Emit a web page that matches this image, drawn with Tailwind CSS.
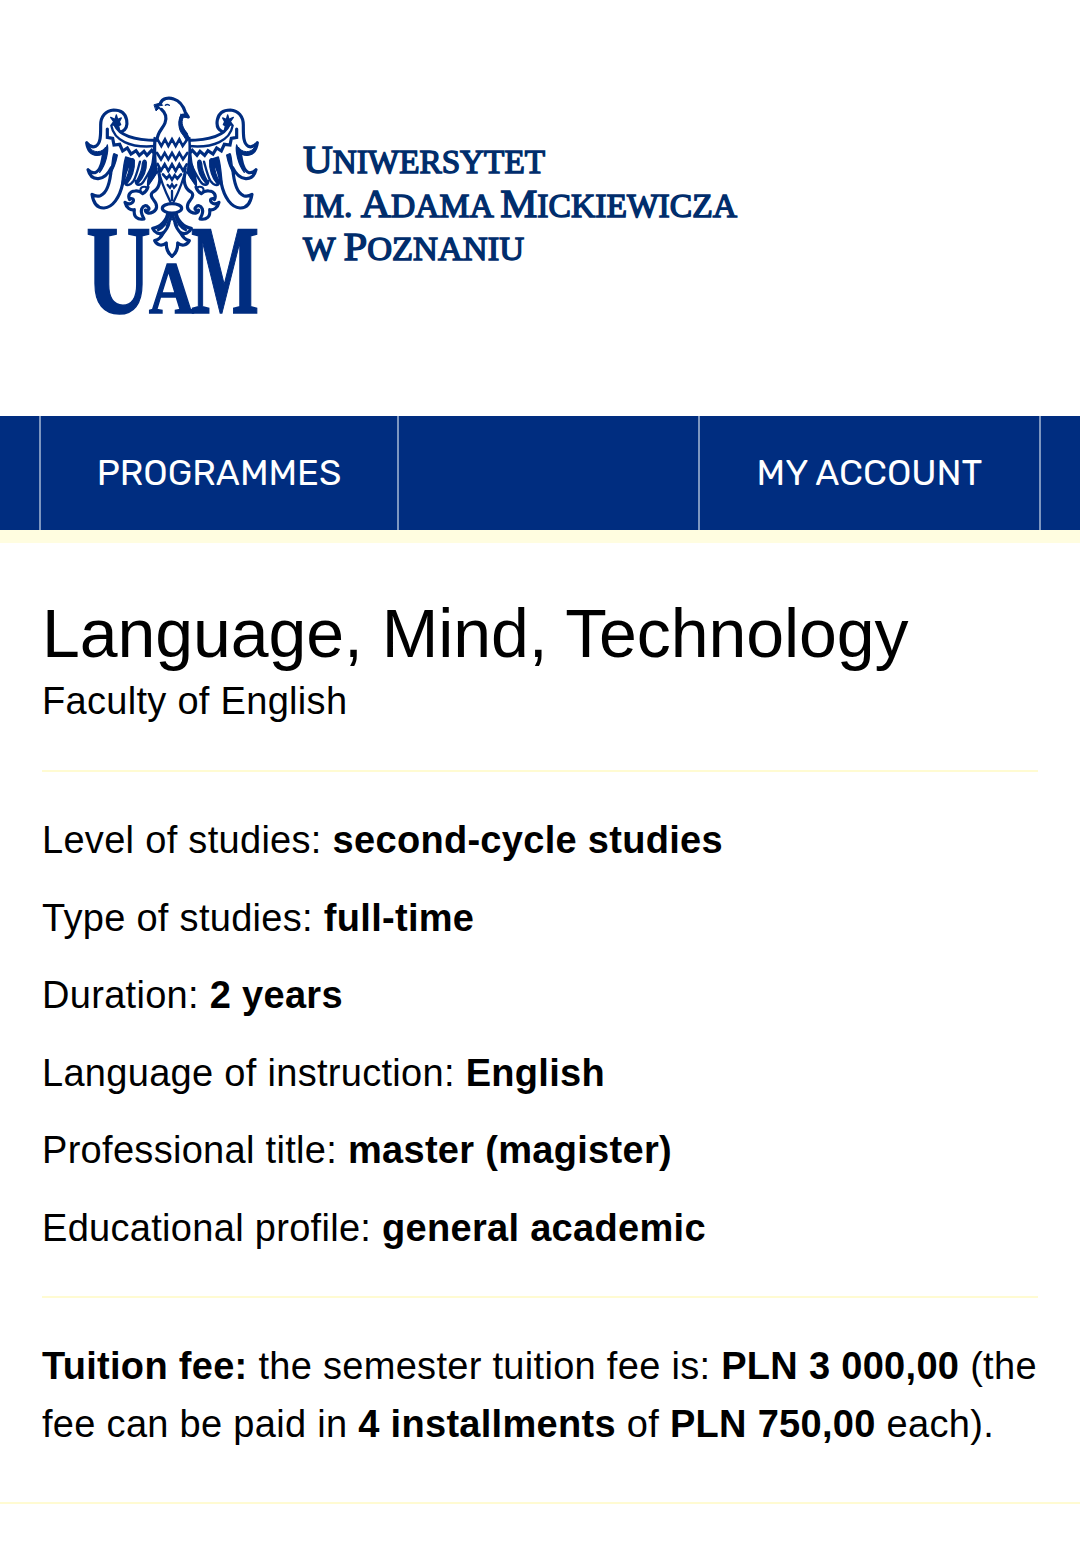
<!DOCTYPE html>
<html lang="en">
<head>
    <meta charset="UTF-8"/>
    <meta name="viewport" content="width=device-width, initial-scale=1.0"/>
    <title>Language, Mind, Technology - Uniwersytet im. Adama Mickiewicza w Poznaniu</title>
    <script src="https://cdn.jsdelivr.net/npm/@tailwindcss/browser@4"></script>
</head>
<body class="bg-white text-black font-['Liberation_Sans',Arial,sans-serif]">

<!-- Logo -->
<header class="h-[416px] pl-[75px] pt-[85px]">
    <svg class="w-[700px] h-[240px]" viewBox="0 0 700 240" role="img" aria-label="Uniwersytet im. Adama Mickiewicza w Poznaniu">
        <defs>
            <g id="wing">
                <!-- outline with three long feathers -->
                <path fill="#fff" d="M140 140C154 134 158 122 155 105C151 83 134 75 116 75C92 77 77 94 77 120C77 148 78 176 62 184C52 188 42 182 35 173C38 194 48 207 66 208C75 208 81 204 86 200C83 230 77 258 60 263C50 264 44 260 39 254C44 274 54 282 70 281C90 280 101 264 109 248C106 288 98 324 76 332C66 335 57 332 51 328C55 354 66 370 87 369C113 367 134 338 143 296C148 268 156 246 164 228"/>
                <path fill="#002d80" stroke-width="3" d="M35 173C43 190 52 200 68 200C80 200 88 192 92 186C90 206 78 212 66 211C48 209 37 194 35 173Z"/>
                <path fill="#002d80" stroke-width="4" d="M86 198C92 190 96 186 97 180C101 200 92 240 74 262C84 240 85 220 86 198ZM109 248C113 232 112 214 117 206L127 210C122 236 116 252 104 268Z"/>
                <path fill="#002d80" stroke-width="4" d="M140 300C143 274 144 242 152 216L170 222C156 246 150 276 140 300Z"/>
                <!-- shoulder bands -->
                <path d="M120 120C132 148 174 166 246 166"/>
                <path stroke-width="7" d="M109 122C116 164 164 191 242 183"/>
                <!-- scalloped row -->
                <path stroke-linejoin="miter" d="M97 132V157L113 160L117 180L134 178L143 198L157 189L168 207L183 197L193 211L207 199L216 211L230 196L242 208"/>
                <!-- inner feathers -->
                <path fill="#002d80" stroke-width="4" d="M165 232C164 256 158 276 148 290L156 296C170 280 180 252 178 226C174 218 168 220 165 232Z"/>
                <path stroke-width="7" d="M149 288C148 306 166 303 176 287C186 268 190 246 195 230"/>
                <path fill="#002d80" stroke-width="4" d="M202 236C201 258 193 274 182 292L188 296C204 280 215 256 214 232C211 222 204 224 202 236Z"/>
                <path stroke-width="7" d="M182 288C182 304 198 302 206 289C214 276 224 262 232 240"/>
                <path fill="#002d80" stroke-width="5" d="M238 158L252 163C245 191 248 225 255 258L243 266C234 283 224 292 219 308C214 284 226 262 232 232C236 208 236 186 238 158Z"/>
                <!-- leg and talons -->
                <path fill="#fff" d="M251 262C259 288 252 312 234 321C226 326 228 336 236 345C249 360 247 374 234 381C222 387 211 384 211 375C218 379 225 373 220 367C214 359 205 361 200 372C196 384 203 393 207 402C187 406 175 395 178 374C167 377 154 369 150 352C160 358 167 359 173 352C181 341 168 338 164 344C157 331 164 319 180 318C190 316 197 320 203 326C210 322 216 316 219 306"/>
                <path stroke-width="6" d="M197 318C194 308 203 303 213 306"/>
                <!-- tail -->
                <path fill="#fff" d="M279 381C277 404 257 427 233 430C239 444 252 449 265 443C259 457 249 465 239 467C247 482 262 484 274 474C273 493 281 506 291 514"/>
                <path d="M279 390C278 412 262 428 250 434M282 414C278 434 264 444 258 452"/>
            </g>
        </defs>

        <g transform="scale(.33333)" fill="none" stroke="#002d80" stroke-width="9.5" stroke-linejoin="round" stroke-linecap="round">
            <use href="#wing"/>
            <use href="#wing" transform="translate(582 0) scale(-1 1)"/>
            <!-- star at each wing tip -->
            <path id="star" fill="#002d80" stroke-width="4" d="M107 97L120 103L124 90L128 103L139 99L133 110L137 119L131 122L134 138L118 120L109 120L116 110Z"/>
            <use href="#star" transform="translate(582 0) scale(-1 1)"/>
            <!-- head and body -->
            <path fill="#fff" stroke="none" d="M262 76L256 55C262 39 280 36 296 42C316 48 326 66 331 82C308 109 316 133 333 146C344 158 341 203 336 255C326 275 318 296 291 351C274 320 255 283 247 252C242 205 243 159 248 149C265 133 280 112 272 91Z"/>
            <path d="M256 55C262 40 280 36 296 42C316 48 326 66 331 82L340 96L324 90C309 109 316 133 333 146M259 73C272 84 276 98 270 114C264 130 246 142 246 166"/>
            <path fill="#002d80" stroke-width="3" d="M238 59L256 54L263 61L249 63L259 72L250 71L244 77Z"/>
            <path fill="#002d80" stroke-width="3" d="M318 88L341 97L325 97C317 113 323 128 336 144L344 163L334 166L324 150C309 135 308 106 318 88Z"/>
            <path stroke-width="4" d="M271 61C275 57 279 58 283 61"/>
            <path stroke-width="7" d="M250 250C256 284 270 318 286 350M332 250C326 284 312 318 296 350"/>
            <!-- breast feathers -->
            <g stroke-linejoin="miter" stroke-width="8">
                <path d="M248 164L259 183L270 163L280 183L291 163L302 183L313 163L323 183L336 164"/>
                <path d="M246 204L258 223L269 204L280 223L291 204L302 223L313 204L324 223L337 204"/>
                <path d="M248 237L258 257L269 238L280 258L291 238L302 258L313 238L324 257L335 238"/>
                <path d="M264 268L275 281L283 271L291 284L299 271L307 281L318 268"/>
                <path stroke-width="7" d="M278 300L285 308L291 298L297 308L304 300M291 318V345"/>
            </g>
            <ellipse cx="291" cy="370" rx="29" ry="14" fill="#fff"/>
            <path fill="#002d80" stroke-width="3" d="M279 385H303L298 394C302 408 306 416 309 424C300 418 294 408 291 400C288 408 282 418 273 424C276 416 280 408 284 394Z"/>
        </g>

        <!-- lettering -->
        <g fill="#002d80" stroke="#002d80" stroke-width="1.6" font-family="'Liberation Serif', serif" font-weight="700">
            <text x="11" y="227.500" font-size="128" textLength="65" lengthAdjust="spacingAndGlyphs">U</text>
            <text x="74" y="227.500" font-size="75" textLength="45" lengthAdjust="spacingAndGlyphs">A</text>
            <text x="116" y="227.500" font-size="128" textLength="68" lengthAdjust="spacingAndGlyphs">M</text>
        </g>
        <g fill="#002d6c" stroke="#002d6c" stroke-width="1.4" font-family="'Liberation Serif', serif" font-size="33">
            <text x="228" y="87.500" textLength="242" lengthAdjust="spacingAndGlyphs"><tspan font-size="41">U</tspan>NIWERSYTET</text>
            <text x="228" y="131.500" textLength="434" lengthAdjust="spacingAndGlyphs">IM. <tspan font-size="41">A</tspan>DAMA <tspan font-size="41">M</tspan>ICKIEWICZA</text>
            <text x="228" y="175" textLength="221" lengthAdjust="spacingAndGlyphs">W <tspan font-size="41">P</tspan>OZNANIU</text>
        </g>
    </svg>
</header>

<!-- Main menu -->
<nav class="flex h-[127px] px-[39px] bg-[#002d80] border-b-[13px] border-[#fffde0] text-white text-[36px] font-[Rubik,Roboto,sans-serif]">
    <a href="#" class="w-[360px] flex items-center justify-center border-x-2 border-[#7d96c0]">PROGRAMMES</a>
    <div class="flex-1"></div>
    <a href="#" class="w-[343px] flex items-center justify-center border-x-2 border-[#7d96c0]">MY ACCOUNT</a>
</nav>

<!-- Programme details -->
<main class="h-[961px] px-[42px] pt-[50px] border-b-2 border-[#fffbd2] text-[38px] leading-[58px] tracking-[0.3px]">
    <h1 class="text-[68px] leading-[80px] tracking-[-0.07px] whitespace-nowrap">Language, Mind, Technology</h1>
    <p class="-mt-px">Faculty of English</p>

    <hr class="mt-10 border-t-2 border-[#fffbd2]"/>

    <div class="mt-[39px] flex flex-col gap-[19.6px]">
        <p>Level of studies: <strong>second-cycle studies</strong></p>
        <p>Type of studies: <strong>full-time</strong></p>
        <p>Duration: <strong>2 years</strong></p>
        <p>Language of instruction: <strong>English</strong></p>
        <p>Professional title: <strong>master (magister)</strong></p>
        <p>Educational profile: <strong>general academic</strong></p>
    </div>

    <hr class="mt-[39px] border-t-2 border-[#fffbd2]"/>

    <p class="mt-[39px] whitespace-nowrap">
        <strong>Tuition fee:</strong> the semester tuition fee is: <strong>PLN 3 000,00</strong> (the<br/>
        fee can be paid in <strong>4 installments</strong> of <strong>PLN 750,00</strong> each).
    </p>
</main>

</body>
</html>
